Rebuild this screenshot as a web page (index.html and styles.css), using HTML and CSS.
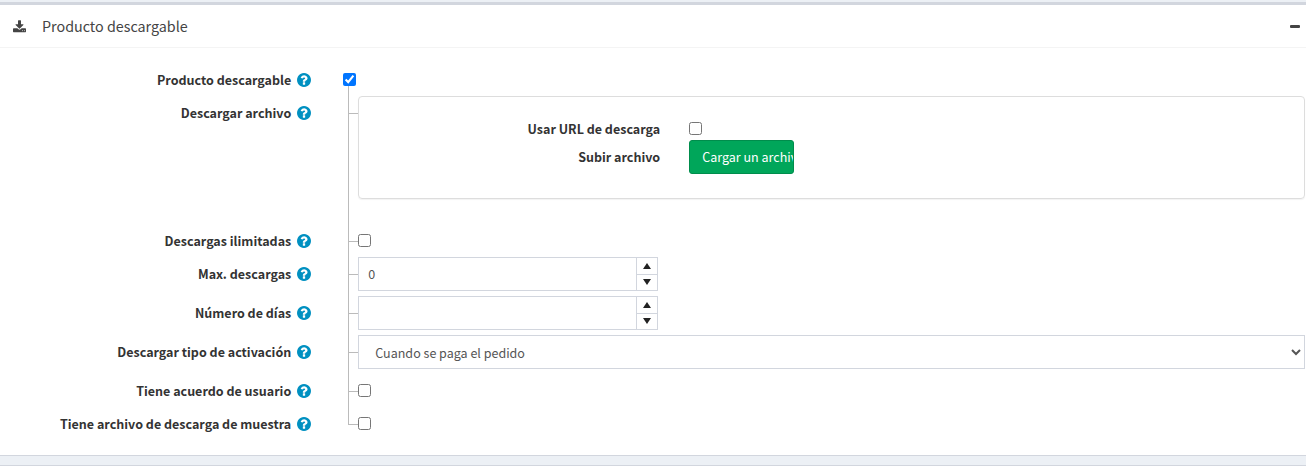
FILE: index.html
```html
<!DOCTYPE html>
<html lang="es">
<head>
<meta charset="utf-8">
<title>Producto descargable</title>
<link rel="stylesheet" href="styles.css">
</head>
<body>
<svg class="sprite" aria-hidden="true">
  <symbol id="help" viewBox="0 0 1536 1536">
    <path d="M896 1248v-192q0-14-9-23t-23-9H672q-14 0-23 9t-9 23v192q0 14 9 23t23 9h192q14 0 23-9t9-23zm256-672q0-88-55.500-163T958 297t-170-41q-243 0-371 213-15 24 8 42l132 100q7 6 19 6 16 0 25-12 53-68 86-92 34-24 86-24 48 0 85.500 26t37.500 59q0 38-20 61t-68 45q-63 28-115.500 86.500T640 892v36q0 14 9 23t23 9h192q14 0 23-9t9-23q0-19 21.500-49.500T972 829q32-18 49-28.500t46-35 44.500-48 28-60.500 12.500-81zm384 192q0 209-103 385.500T1153.500 1433 768 1536t-385.500-103T103 1153.500 0 768t103-385.500T382.500 103 768 0t385.500 103T1433 382.500 1536 768z"/>
  </symbol>
</svg>
<main>
<section class="card">
  <header class="card-header">
    <svg class="download" viewBox="0 0 1664 1600" aria-hidden="true"><path d="M1280 1344q0-26-19-45t-45-19-45 19-19 45 19 45 45 19 45-19 19-45zm256 0q0-26-19-45t-45-19-45 19-19 45 19 45 45 19 45-19 19-45zm128-224v320q0 40-28 68t-68 28H96q-40 0-68-28t-28-68v-320q0-40 28-68t68-28h465l135 136q58 56 136 56t136-56l136-136h464q40 0 68 28t28 68zm-325-569q17 41-14 70l-448 448q-18 19-45 19t-45-19L339 621q-31-29-14-70 17-39 59-39h256V64q0-26 19-45t45-19h256q26 0 45 19t19 45v448h256q42 0 59 39z"/></svg>
    <h1 class="card-title">Producto descargable</h1>
    <button class="collapse" type="button" aria-label="Contraer"><span class="minus"></span></button>
  </header>
  <form class="card-body">
    <div class="row">
      <div class="label"><label for="is-download">Producto descargable</label><svg class="help"><use href="#help"/></svg></div>
      <div class="root"><input class="check" id="is-download" type="checkbox" checked><span class="stem"></span></div>
    </div>
    <div class="row nested">
      <div class="label"><span>Descargar archivo</span><svg class="help"><use href="#help"/></svg></div>
      <div class="branch"><span class="tick"></span></div>
      <div class="panel">
        <div class="panel-row">
          <label class="panel-label" for="use-url">Usar URL de descarga</label>
          <div><input class="check" id="use-url" type="checkbox"></div>
        </div>
        <div class="panel-row">
          <label class="panel-label" for="upload">Subir archivo</label>
          <div><button class="upload" id="upload" type="button">Cargar un archivo</button></div>
        </div>
      </div>
    </div>
    <div class="row nested">
      <div class="label"><label for="unlimited">Descargas ilimitadas</label><svg class="help"><use href="#help"/></svg></div>
      <div class="branch"><span class="tick"></span></div>
      <div><input class="check" id="unlimited" type="checkbox"></div>
    </div>
    <div class="row nested">
      <div class="label"><label for="max">Max. descargas</label><svg class="help"><use href="#help"/></svg></div>
      <div class="branch"><span class="tick"></span></div>
      <div class="spinner">
        <input class="number" id="max" type="text" value="0">
        <div class="steps">
          <button class="step" type="button" aria-label="Aumentar"><span class="up"></span></button>
          <button class="step" type="button" aria-label="Disminuir"><span class="down"></span></button>
        </div>
      </div>
    </div>
    <div class="row nested">
      <div class="label"><label for="days">Número de días</label><svg class="help"><use href="#help"/></svg></div>
      <div class="branch"><span class="tick"></span></div>
      <div class="spinner">
        <input class="number" id="days" type="text">
        <div class="steps">
          <button class="step" type="button" aria-label="Aumentar"><span class="up"></span></button>
          <button class="step" type="button" aria-label="Disminuir"><span class="down"></span></button>
        </div>
      </div>
    </div>
    <div class="row nested">
      <div class="label"><label for="activation">Descargar tipo de activación</label><svg class="help"><use href="#help"/></svg></div>
      <div class="branch"><span class="tick"></span></div>
      <select class="select" id="activation"><option>Cuando se paga el pedido</option></select>
    </div>
    <div class="row nested">
      <div class="label"><label for="agreement">Tiene acuerdo de usuario</label><svg class="help"><use href="#help"/></svg></div>
      <div class="branch"><span class="tick"></span></div>
      <div><input class="check" id="agreement" type="checkbox"></div>
    </div>
    <div class="row nested">
      <div class="label"><label for="sample">Tiene archivo de descarga de muestra</label><svg class="help"><use href="#help"/></svg></div>
      <div class="branch last"><span class="tick"></span></div>
      <div><input class="check" id="sample" type="checkbox"></div>
    </div>
  </form>
</section>
<section class="card next"></section>
</main>
</body>
</html>
```
FILE: styles.css
```css
* { box-sizing: border-box; }
html { overflow: hidden; }
body {
  margin: 0;
  background: #ecf0f5;
  color: #333;
  font: 14px/20px "Source Sans Pro", "Noto Sans CJK SC", "Noto Sans", sans-serif;
  /* x-height of Source Sans Pro, so that fallback fonts keep its apparent size */
  font-size-adjust: 0.486;
}
input, button, select { font-size-adjust: inherit; }
.sprite { display: none; }
main { padding-top: 2px; }
.card {
  background: #fff;
  border-top: 3px solid #d2d6de;
  border-bottom: 1px solid #d2d6de;
}
.next { margin-top: 9px; }
.card-header {
  display: flex;
  align-items: center;
  height: 43px;
  padding: 0 6px 0 13px;
  border-bottom: 1px solid #f4f4f4;
}
.download { width: 13px; height: 13px; fill: #444; }
.card-title {
  flex: 1;
  margin: 0 0 0 16px;
  color: #444;
  font-size: 16px;
  font-weight: 400;
}
.collapse {
  padding: 8px 0;
  border: 0;
  background: none;
}
.minus {
  display: block;
  width: 10px;
  height: 3px;
  border-radius: 1px;
  background: #444;
}
.card-body { padding: 15px 1px 15px 0; }
.row {
  display: grid;
  grid-template-columns: 25% 1fr;
  min-height: 33px;
}
.nested { grid-template-columns: 25% 32px 1fr; }
.label {
  display: flex;
  justify-content: flex-end;
  align-items: flex-start;
  gap: 6px;
  padding: 7px 15px 0 0;
  font-weight: 700;
}
.help {
  width: 14px;
  height: 14px;
  margin-top: 3px;
  fill: #0090c1;
}
.check {
  display: block;
  width: 13px;
  height: 13px;
  margin: 10px 0 0;
}
.root {
  display: flex;
  flex-direction: column;
  margin-left: 17px;
}
.stem {
  flex: 1;
  margin-left: 5px;
  border-left: 1px solid #bbb;
}
.branch {
  margin-left: 22px;
  border-left: 1px solid #bbb;
}
.last { height: 18px; }
.tick {
  display: block;
  height: 1px;
  margin-top: 17px;
  background: #bbb;
}
.panel {
  margin-bottom: 25px;
  padding: 15px 15px 24px 0;
  border: 1px solid #ddd;
  border-radius: 4px;
  box-shadow: 0 1px 1px rgba(0, 0, 0, 0.05);
}
.panel-row {
  display: grid;
  grid-template-columns: 1fr 2fr;
  min-height: 28px;
}
.panel-label {
  padding: 7px 9px 0 0;
  font-weight: 700;
  text-align: right;
}
.panel-row > div { padding-left: 20px; }
.upload {
  display: block;
  width: 105px;
  height: 34px;
  padding: 0 0 0 12px;
  overflow: hidden;
  border: 1px solid #008d4c;
  border-radius: 3px;
  background: #00a65a;
  color: #fff;
  font: inherit;
  font-size-adjust: inherit;
  text-align: left;
  white-space: nowrap;
}
.spinner {
  display: flex;
  width: 300px;
  height: 34px;
  margin-bottom: 5px;
  border: 1px solid #d2d6de;
}
.number {
  flex: 1;
  min-width: 0;
  padding: 0 9px;
  border: 0;
  color: #555;
  font: inherit;
  font-size-adjust: inherit;
}
.steps {
  display: flex;
  flex-direction: column;
  width: 21px;
  border-left: 1px solid #d2d6de;
}
.step {
  display: flex;
  flex: 1;
  justify-content: center;
  align-items: center;
  padding: 0;
  border: 0;
  background: #fff;
}
.step + .step { border-top: 1px solid #d2d6de; }
.up, .down {
  border: 4px solid transparent;
  border-top-width: 0;
  border-bottom: 6px solid #222;
}
.down {
  border-top: 6px solid #222;
  border-bottom-width: 0;
}
.select {
  width: 100%;
  height: 34px;
  margin: 0 0 5px;
  padding: 6px 12px;
  border: 1px solid #d2d6de;
  border-radius: 0;
  background: #fff;
  color: #555;
  font: inherit;
  font-size-adjust: inherit;
}
```
